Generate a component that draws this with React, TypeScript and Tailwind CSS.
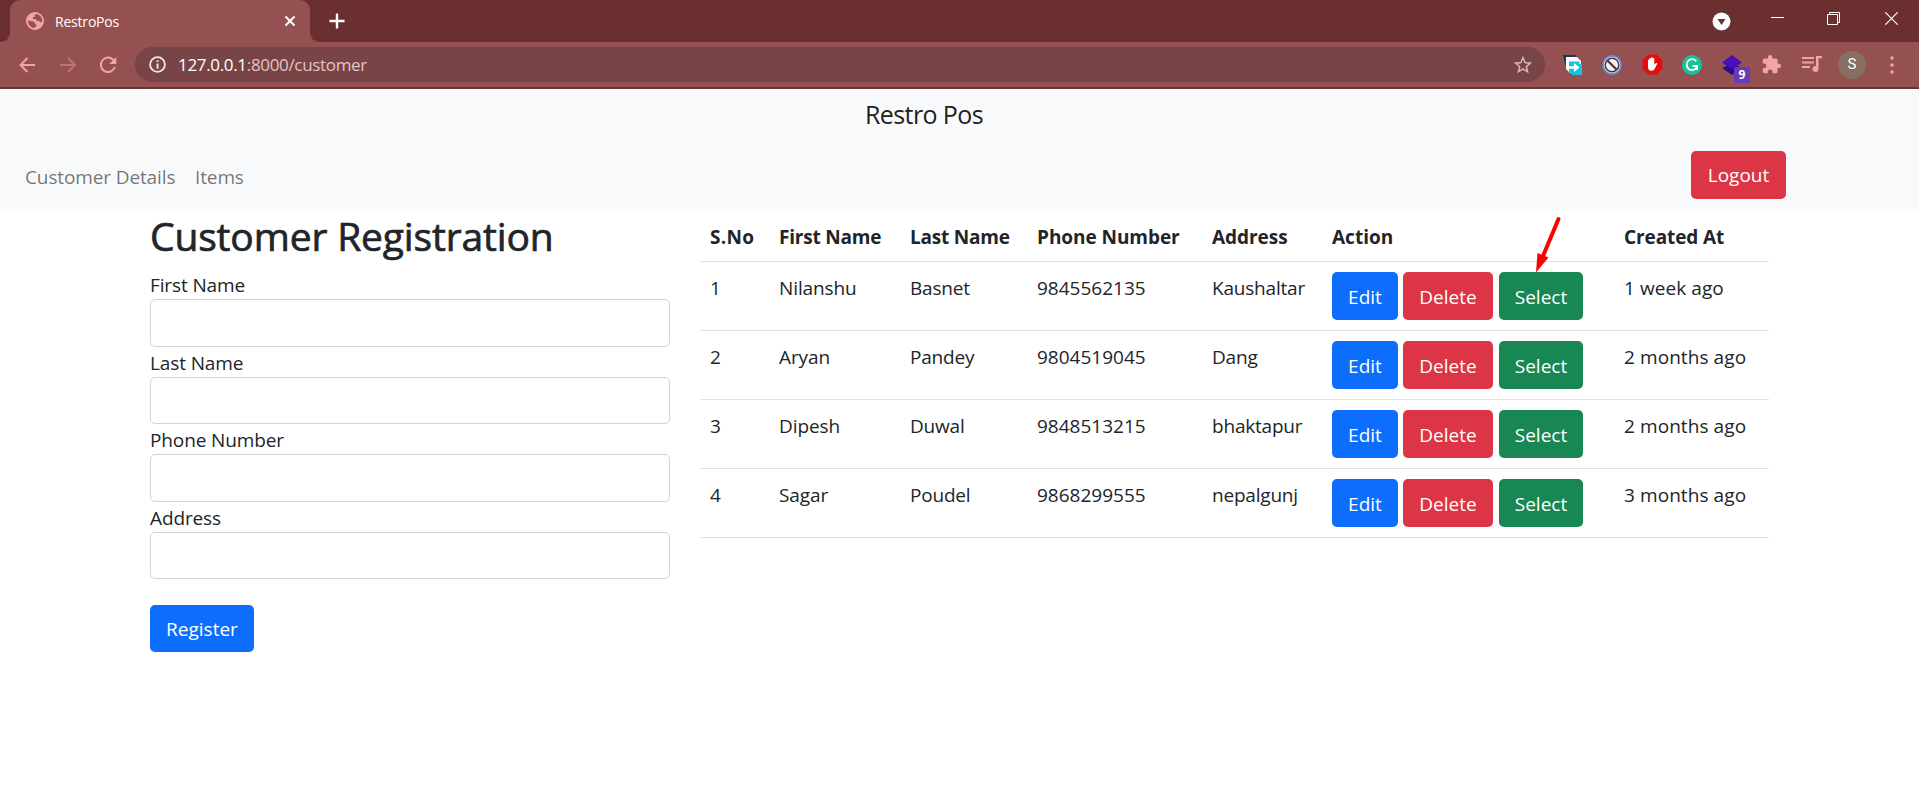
import React from "react";

const ui = "font-['Open_Sans','Noto_Sans',sans-serif]";

type Tone = "blue" | "red" | "green";
const tones: Record<Tone, string> = {
  blue: "bg-[#0d6efd]",
  red: "bg-[#dc3545]",
  green: "bg-[#198754]",
};

function Button({ tone, size, children }: { tone: Tone; size: string; children: React.ReactNode }) {
  return (
    <button className={`flex items-center justify-center rounded-[5px] pt-px text-[19px] text-white ${tones[tone]} ${size}`}>
      {children}
    </button>
  );
}

const rows = [
  ["1", "Nilanshu", "Basnet", "9845562135", "Kaushaltar", "1 week ago"],
  ["2", "Aryan", "Pandey", "9804519045", "Dang", "2 months ago"],
  ["3", "Dipesh", "Duwal", "9848513215", "bhaktapur", "2 months ago"],
  ["4", "Sagar", "Poudel", "9868299555", "nepalgunj", "3 months ago"],
];

const grid = "grid grid-cols-[69px_131px_127px_175px_120px_292px_155px] border-b border-[#dee2e6]";

const headings: [string, string][] = [
  ["S.No", "tracking-[0.3px]"],
  ["First Name", "tracking-[-0.2px]"],
  ["Last Name", "tracking-[-0.2px]"],
  ["Phone Number", "tracking-[-0.05px]"],
  ["Address", "tracking-[-0.05px]"],
  ["Action", "tracking-[0px]"],
  ["Created At", "tracking-[-0.1px]"],
];

function TitleBar() {
  return (
    <div className="flex h-[42px] bg-[#6b2f2f]">
      <div className="flex w-[10px] items-end bg-[#955152]">
        <div className="h-full w-full rounded-br-[9px] bg-[#6b2f2f]" />
      </div>
      <div className="flex w-[300px] items-center rounded-t-[10px] bg-[#955152] pl-4 pr-[14px]">
        <svg width="18" height="18" viewBox="0 0 18 18">
          <circle cx="9" cy="9" r="9" fill="#f4a3a6" />
          <path d="M10.8 1.9 8.6 3.1l.5 1.6-1.9.3-.6 1.9 2.8.2 1.4 1.7 2.2.2 1.6 1.4 1.7-.9A7.2 7.2 0 0 0 10.8 1.9ZM2 8.2l3.3 1 2.3.2 1.6 1.5-.5 1.4 2.2.6-.4 1.2-2.4 2A7.2 7.2 0 0 1 2 8.2Z" fill="#955152" />
        </svg>
        <span className="ml-[11px] flex-1 text-[14px] tracking-[-0.2px] text-white">RestroPos</span>
        <svg width="12" height="12" viewBox="0 0 12 12" stroke="white" strokeWidth="2">
          <path d="m1.5 1.5 9 9m0-9-9 9" />
        </svg>
      </div>
      <div className="w-[10px] bg-[#955152]">
        <div className="h-full w-full rounded-bl-[9px] bg-[#6b2f2f]" />
      </div>
      <svg className="ml-[9px] mt-[13px]" width="16" height="16" viewBox="0 0 16 16" stroke="white" strokeWidth="2.4">
        <path d="M8 .5v15M.5 8h15" />
      </svg>
      <div className="flex flex-1 justify-end">
        <svg className="mt-[12px]" width="19" height="19" viewBox="0 0 19 19">
          <circle cx="9.5" cy="9.5" r="9" fill="white" />
          <path d="M5.5 7h8l-4 6z" fill="#6b2f2f" />
        </svg>
        <svg className="ml-[40px] mt-[12px]" width="13" height="13" viewBox="0 0 13 13">
          <path d="M0 5.5h13" stroke="white" />
        </svg>
        <svg className="ml-[43px] mt-[12px]" width="13" height="13" viewBox="0 0 13 13" fill="none" stroke="white">
          <path d="M.5 2.5h10v10H.5zM2.5 2.5v-2h10v10h-2" />
        </svg>
        <svg className="ml-[45px] mr-[21px] mt-[12px]" width="13" height="13" viewBox="0 0 13 13" stroke="white" strokeWidth="1.2">
          <path d="m.3.3 12.4 12.4m0-12.4L.3 12.7" />
        </svg>
      </div>
    </div>
  );
}

function AddressBar() {
  return (
    <div className="flex h-[47px] items-center border-b-2 border-[#623637] bg-[#955152]">
      <svg className="ml-[19px]" width="17" height="16" viewBox="0 0 17 16" fill="none" stroke="#f4a3a6" strokeWidth="2">
        <path d="M16 8H2M8.5 1 1.5 8l7 7" />
      </svg>
      <svg className="ml-[24px]" width="17" height="16" viewBox="0 0 17 16" fill="none" stroke="#bd7374" strokeWidth="2">
        <path d="M0 8h15M8 1l7 7-7 7" />
      </svg>
      <svg className="ml-[22px]" width="18" height="18" viewBox="0 0 18 18">
        <path d="M14.8 4.5A7.2 7.2 0 1 0 15.9 11" fill="none" stroke="#f4a3a6" strokeWidth="2" />
        <path d="M17.3 1v7h-7z" fill="#f4a3a6" />
      </svg>
      <div className="ml-[18px] flex h-[35px] w-[1410px] items-center rounded-full bg-[#794445] pl-[14px] pr-[11px]">
        <svg width="17" height="17" viewBox="0 0 17 17">
          <circle cx="8.5" cy="8.5" r="7.4" fill="none" stroke="#f5e6e6" strokeWidth="1.8" />
          <path d="M7.6 4.2h1.9V6H7.6zM7.6 7.4h1.9v5.3H7.6z" fill="#f5e6e6" />
        </svg>
        <span className="ml-[12px] flex-1 text-[17px] tracking-[-0.33px] text-[#e3c3c4]">
          <span className="text-white">127.0.0.1</span>:8000/customer
        </span>
        <svg width="22" height="22" viewBox="0 0 24 24" fill="#d5bcbc">
          <path d="m22 9.24-7.19-.62L12 2 9.19 8.63 2 9.24l5.46 4.73L5.82 21 12 17.27 18.18 21l-1.63-7.03L22 9.24zM12 15.4l-3.76 2.27 1-4.28-3.32-2.88 4.38-.38L12 6.1l1.71 4.04 4.38.38-3.32 2.88 1 4.28L12 15.4z" />
        </svg>
      </div>
      <svg className="ml-[18px]" width="20" height="20" viewBox="0 0 20 20">
        <path d="M0 0h12l3 3v10H3z" fill="#123a5c" />
        <path d="M3 2h11l4 4v12H7l-4-4z" fill="white" />
        <path d="M6 6.500h10.500V9H19v11H9.500L6 16.500z" fill="#18c2dc" />
        <path d="M5.500 11.200H11V8l5.500 4.500L11 17v-3.200H5.500z" fill="white" />
      </svg>
      <svg className="ml-[19px]" width="20" height="20" viewBox="0 0 20 20">
        <circle cx="10" cy="10" r="9" fill="white" stroke="#5b93dd" strokeWidth="1.8" />
        <circle cx="10" cy="10" r="6.800" fill="#f3f3f3" stroke="#5a3038" strokeWidth="1.500" />
        <path d="m5.500 5.500 9 9" stroke="#5a3038" strokeWidth="2.200" />
      </svg>
      <svg className="ml-[20px]" width="21" height="21" viewBox="0 0 21 21">
        <path d="M6.300.5h8.400l5.800 5.800v8.400l-5.800 5.800H6.300L.5 14.700V6.300z" fill="#e40d0d" />
        <path d="M6 10.500V6.300c0-1 1.400-1 1.400 0V4.800c0-1 1.600-1 1.600 0V4c0-1 1.700-1 1.700 0v.8c0-1 1.600-1 1.600 0v6l1.300-1.400c.8-.8 1.900-.1 1.400.8l-2.300 4.600c-.6 1.200-1.500 1.900-3 1.900C7 16.700 6 15.300 6 13z" fill="white" />
      </svg>
      <svg className="ml-[19px]" width="20" height="20" viewBox="0 0 20 20">
        <circle cx="10" cy="10" r="10" fill="#15c39a" />
        <path d="M14.300 6.200A5.400 5.400 0 1 0 14.800 12.300" fill="none" stroke="white" strokeWidth="1.800" />
        <path d="M10.500 11h4.600v4" fill="none" stroke="white" strokeWidth="1.800" />
      </svg>
      <div className="relative ml-[20px] h-[20px] w-[20px]">
        <svg width="20" height="20" viewBox="0 0 20 20">
          <path d="m0 13 10-5 10 5-10 7z" fill="#2d0a86" />
          <path d="m0 7.500 10-7.500 10 7.500-10 7z" fill="#4b0db8" />
        </svg>
        <span className="absolute left-[12px] top-[12px] flex h-[16px] w-[16px] items-center justify-center rounded-[2px] bg-[#673ab7] text-[12px] font-bold text-white">9</span>
      </div>
      <svg className="ml-[19px]" width="21" height="21" viewBox="0 0 24 24" fill="#f4a3a6">
        <path d="M20.500 11H19V7c0-1.100-.9-2-2-2h-4V3.500a2.500 2.500 0 0 0-5 0V5H4c-1.100 0-2 .9-2 2v3.800h1.500a2.700 2.700 0 0 1 0 5.400H2V20c0 1.100.9 2 2 2h3.800v-1.500a2.700 2.700 0 0 1 5.400 0V22H17c1.100 0 2-.9 2-2v-4h1.500a2.500 2.500 0 0 0 0-5z" />
      </svg>
      <svg className="ml-[20px]" width="20" height="17" viewBox="0 0 20 17">
        <path d="M0 2h12M0 6.500h12M0 11h8" stroke="#f4a3a6" strokeWidth="2" />
        <path d="M14 0h6v2.300h-3.500V13a3 3 0 1 1-2.500-3z" fill="#f4a3a6" />
      </svg>
      <div className="ml-[16px] flex h-[28px] w-[28px] items-center justify-center rounded-full bg-[#876e62] font-[Roboto,sans-serif] text-[15px] text-white">S</div>
      <svg className="ml-[24px]" width="4" height="18" viewBox="0 0 4 18" fill="#f4a3a6">
        <circle cx="2" cy="2" r="1.800" />
        <circle cx="2" cy="9" r="1.800" />
        <circle cx="2" cy="16" r="1.800" />
      </svg>
    </div>
  );
}

export default function App() {
  return (
    <div className={`h-[801px] w-[1919px] overflow-hidden bg-white text-[#212529] ${ui}`}>
      <TitleBar />
      <AddressBar />
      <header className="h-[122px] bg-[#f8f9fa]">
        <div className="flex h-[54px] items-center pb-[3px] pl-[865px] text-[25px] text-black/90">
          <span className="tracking-[-0.600px]">Restro Pos</span>
        </div>
        <nav className="flex items-start pl-[25px] pr-[133px] pt-[8px] text-[19px] text-black/55">
          <a className="mt-[12px] w-[170px] tracking-[-0.120px]">Customer Details</a>
          <a className="mt-[12px] flex-1 tracking-[-0.120px]">Items</a>
          <Button tone="red" size="h-[48px] w-[95px]">Logout</Button>
        </nav>
      </header>
      <main className="flex gap-[30px] pl-[150px]">
        <form className="w-[520px]">
          <h1 className="h-[60px] text-[39px] leading-[49px] tracking-[-0.150px] [-webkit-text-stroke:0.700px_#212529]">Customer Registration</h1>
          {["First Name", "Last Name", "Phone Number", "Address"].map((label) => (
            <label key={label} className="block h-[77.600px] text-[19px] leading-[28px]">
              <span className="block tracking-[-0.120px]">{label}</span>
              <input className="block h-[47.500px] w-full rounded-[5px] border border-[#ced4da] px-4" />
            </label>
          ))}
          <div className="pt-[24px]">
            <Button tone="blue" size="h-[47px] w-[104px]">Register</Button>
          </div>
        </form>
        <section className="relative w-[1069px] text-[19px] leading-[30px]">
          <div className={`${grid} h-[51px] font-bold`}>
            {headings.map(([label, tracking]) => (
              <div key={label} className={`whitespace-nowrap pl-[10px] pt-[11px] ${tracking}`}>{label}</div>
            ))}
          </div>
          {rows.map(([no, first, last, phone, address, created]) => (
            <div key={no} className={`${grid} h-[69px]`}>
              <div className="pl-[10px] pt-[11px]">{no}</div>
              <div className="pl-[10px] pt-[11px] tracking-[-0.100px]">{first}</div>
              <div className="pl-[10px] pt-[11px] tracking-[-0.200px]">{last}</div>
              <div className="pl-[10px] pt-[11px]">{phone}</div>
              <div className="pl-[10px] pt-[11px] tracking-[-0.200px]">{address}</div>
              <div className="flex pl-[10px] pt-[10px]">
                <Button tone="blue" size="mr-[5px] h-[48px] w-[66px]">Edit</Button>
                <Button tone="red" size="mr-[6px] h-[48px] w-[90px]">Delete</Button>
                <Button tone="green" size="h-[48px] w-[84px]">Select</Button>
              </div>
              <div className="whitespace-nowrap pl-[10px] pt-[11px] tracking-[0.080px]">{created}</div>
            </div>
          ))}
          <svg className="absolute left-[834px] top-[4px]" width="30" height="60" viewBox="0 0 30 60">
            <path d="M24.500 4 9 41" stroke="#ff0000" strokeWidth="4" strokeLinecap="round" />
            <path d="M2 57.500 3.500 38 14.500 42.500z" fill="#ff0000" />
          </svg>
        </section>
      </main>
    </div>
  );
}
